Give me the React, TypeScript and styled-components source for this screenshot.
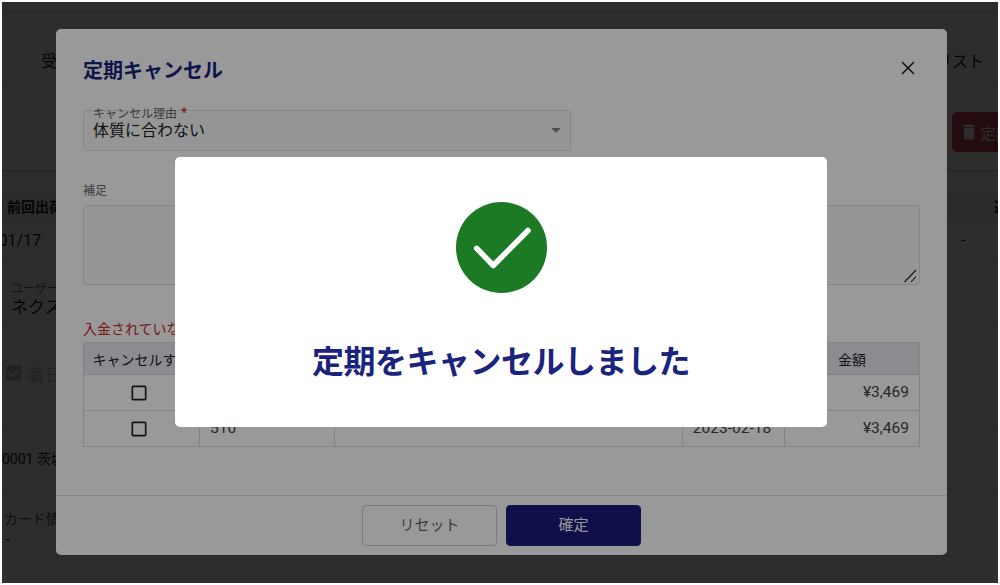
import React from 'react';
import styled, { createGlobalStyle } from 'styled-components';

const GlobalStyle = createGlobalStyle`
  html, body {
    margin: 0;
    padding: 0;
    background: #fff;
  }
  body {
    font-family: Roboto, 'Noto Sans CJK JP', sans-serif;
    color: #212121;
  }
`;

const Viewport = styled.div`
  position: relative;
  width: 996px;
  height: 581px;
  margin: 2px;
  overflow: hidden;
  background: #fff;
`;

/* page behind the dialogs */
const Page = styled.div`
  display: flex;
  flex-direction: column;
  height: 100%;
`;

const TopBar = styled.div`
  height: 10px;
  flex: none;
  border-bottom: 1px solid #d0d0d0;
`;

const Tabs = styled.div`
  height: 73px;
  flex: none;
  display: flex;
  justify-content: space-between;
  align-items: center;
  box-sizing: border-box;
  padding: 22px 14px 0 39px;
  border-bottom: 1px solid #eee;
  font-size: 16px;
  white-space: nowrap;
`;

const Toolbar = styled.div`
  height: 86px;
  flex: none;
  display: flex;
  align-items: center;
  padding: 8px 0 0 950px;
  border-bottom: 2px solid #ddd;
  box-sizing: border-box;
`;

const DangerButton = styled.div`
  flex: none;
  width: 160px;
  height: 40px;
  display: flex;
  align-items: center;
  gap: 2px;
  padding-left: 6.5px;
  box-sizing: border-box;
  background: #c8404a;
  border-radius: 5px;
  color: #fff;
  font-size: 15px;
`;

const SummaryTable = styled.div`
  margin-top: 19px;
  flex: none;
  display: grid;
  grid-template-columns: 330px 1fr 46px;
  grid-template-rows: 31px 36px;
  border-bottom: 1px solid #eee;
  font-size: 16px;
`;

const SummaryHead = styled.div<{ $pad: number }>`
  display: flex;
  align-items: center;
  padding-left: ${(p) => p.$pad}px;
  background: #f4f4f4;
  font-weight: 700;
  font-size: 14px;
  white-space: nowrap;
  border-bottom: 1px solid #eee;
  overflow: hidden;
`;

const SummaryCell = styled.div<{ $pad?: number; $shift?: number }>`
  display: flex;
  align-items: center;
  padding-left: ${(p) => p.$pad ?? 0}px;
  margin-left: ${(p) => p.$shift ?? 0}px;
  white-space: nowrap;
`;

const InfoRow = styled.div`
  height: 67px;
  flex: none;
  display: flex;
  flex-direction: column;
  justify-content: center;
  box-sizing: border-box;
  padding: 14px 0 0 9px;
  border-bottom: 1px solid #eee;
  white-space: nowrap;
`;

const InfoLabel = styled.div`
  font-size: 12px;
  line-height: 15px;
  color: #666;
`;

const InfoValue = styled.div`
  font-size: 17px;
  line-height: 20px;
`;

const CheckRow = styled.div`
  height: 101px;
  flex: none;
  display: flex;
  align-items: center;
  gap: 4px;
  box-sizing: border-box;
  padding: 0 0 6px 2px;
  border-bottom: 1px solid #eee;
  color: #bbb;
  font-size: 17px;
  white-space: nowrap;
`;

const AddressRow = styled.div`
  height: 62px;
  flex: none;
  display: flex;
  align-items: center;
  box-sizing: border-box;
  border-bottom: 1px solid #eee;
  font-size: 14px;
  white-space: nowrap;
`;

const CardRow = styled.div`
  height: 67px;
  flex: none;
  display: flex;
  flex-direction: column;
  justify-content: center;
  box-sizing: border-box;
  padding: 14px 0 0 2px;
  border-bottom: 1px solid #eee;
  font-size: 14px;
  line-height: 20px;
  color: #555;
  white-space: nowrap;
`;

const CardValue = styled.div`
  padding-left: 2px;
  color: #212121;
`;

const PageEnd = styled.div`
  height: 10px;
  flex: none;
  border-bottom: 1px solid #eee;
`;

/* stacked layers */
const Backdrop = styled.div<{ $alpha: number }>`
  position: absolute;
  inset: 0;
  display: flex;
  background: rgba(0, 0, 0, ${(p) => p.$alpha});
`;

const Modal = styled.div`
  width: 891px;
  height: 526px;
  margin: 27px 0 0 54px;
  display: flex;
  flex-direction: column;
  background: #fff;
  border-radius: 5px;
`;

const ModalBody = styled.div`
  flex: 1;
  min-height: 0;
  padding: 0 27px;
`;

const ModalHeader = styled.div`
  height: 81px;
  display: flex;
  align-items: center;
  justify-content: space-between;
  padding-right: 3px;
  box-sizing: border-box;
`;

const ModalTitle = styled.h2`
  margin: 0;
  font-size: 20px;
  font-weight: 700;
  color: #1a237e;
`;

const CloseIcon = styled.svg`
  width: 14px;
  height: 14px;
  margin-top: -3px;
  margin-right: 2px;
  color: #212121;
`;

const SelectBox = styled.div`
  width: 488px;
  height: 41px;
  display: flex;
  align-items: center;
  justify-content: space-between;
  box-sizing: border-box;
  padding: 0 9px;
  border: 1px solid #e0e0e0;
  border-radius: 4px;
  background: #fafafa;
`;

const SelectText = styled.div`
  display: flex;
  flex-direction: column;
  margin-top: -13px;
`;

const SelectLabel = styled.div`
  font-size: 12px;
  line-height: 13px;
  color: #666;
`;

const Required = styled.span`
  color: #c62828;
  font-size: 14px;
  margin-left: 4px;
`;

const SelectValue = styled.div`
  font-size: 16px;
  line-height: 20px;
  color: #212121;
`;

const Caret = styled.span`
  width: 0;
  height: 0;
  border-left: 5px solid transparent;
  border-right: 5px solid transparent;
  border-top: 5px solid #888;
`;

const FieldLabel = styled.div`
  margin-top: 32px;
  font-size: 12px;
  line-height: 16px;
  color: #666;
`;

const TextArea = styled.div`
  margin-top: 6px;
  height: 80px;
  box-sizing: border-box;
  display: flex;
  align-items: flex-end;
  justify-content: flex-end;
  border: 1px solid #e0e0e0;
  border-radius: 4px;
  background: #fafafa;
`;

const Grip = styled.svg`
  width: 14px;
  height: 14px;
  margin: 0 2px 1px 0;
`;

const Notice = styled.div`
  margin-top: 34px;
  font-size: 14px;
  line-height: 20px;
  color: #c62828;
  white-space: nowrap;
`;

const OrderTable = styled.table`
  width: 836px;
  margin-top: 3px;
  border-collapse: collapse;
  table-layout: fixed;
  font-size: 15.5px;
`;

const Col = styled.col<{ $w: number }>`
  width: ${(p) => p.$w}px;
`;

const Th = styled.th`
  height: 31px;
  padding: 0;
  border: 1px solid #ddd;
  background: #e8e8f0;
  font-size: 14px;
  font-weight: 400;
  color: #212121;
  text-align: center;
  white-space: nowrap;
`;

const Td = styled.td<{ $align?: string }>`
  box-sizing: border-box;
  height: 36px;
  padding: 0 10px 2px;
  border: 1px solid #ddd;
  color: #444;
  white-space: nowrap;
  text-align: ${(p) => p.$align ?? 'left'};
`;

const BoxCell = styled(Td)`
  padding: 1px 15px 0 10px;
`;

const DateCell = styled(Td)`
  padding-left: 9px;
  padding-right: 12px;
`;

const BoxIcon = styled.svg`
  display: block;
  width: 20px;
  height: 20px;
  margin: 0 auto;
  color: #212121;
`;

const Footer = styled.div`
  height: 60px;
  flex: none;
  display: flex;
  justify-content: center;
  gap: 9px;
  padding-top: 9px;
  box-sizing: border-box;
  border-top: 1px solid #ddd;
`;

const FooterButton = styled.div<{ $primary?: boolean }>`
  width: 135px;
  height: 41px;
  display: flex;
  align-items: center;
  justify-content: center;
  box-sizing: border-box;
  padding-bottom: 5px;
  border-radius: 4px;
  border: 1px solid ${(p) => (p.$primary ? '#1a237e' : '#ccc')};
  background: ${(p) => (p.$primary ? '#1a1a7e' : 'transparent')};
  color: ${(p) => (p.$primary ? '#fff' : '#666')};
  font-size: 15px;
`;

const SuccessDialog = styled.div`
  width: 652px;
  height: 270px;
  margin: 155px 0 0 173px;
  display: flex;
  flex-direction: column;
  align-items: center;
  box-sizing: border-box;
  padding-top: 45px;
  background: #fff;
  border-radius: 5px;
`;

const SuccessMark = styled.svg`
  width: 91px;
  height: 91px;
  flex: none;
`;

const SuccessTitle = styled.h1`
  margin: 46px 0 0;
  font-size: 32px;
  line-height: 46px;
  letter-spacing: -0.5px;
  font-weight: 700;
  color: #1a237e;
  white-space: nowrap;
`;

const orders = [
  { id: '509', date: '2023-01-18', amount: '¥3,469' },
  { id: '510', date: '2023-02-18', amount: '¥3,469' },
];

const App = () => {
  return (
    <>
      <GlobalStyle />
      <Viewport>
        <Page>
          <TopBar />
          <Tabs>
            <span>受注情報</span>
            <span>リスト</span>
          </Tabs>
          <Toolbar>
            <DangerButton>
              <svg width="20" height="20" viewBox="0 0 24 24" fill="currentColor">
                <path d="M6 19c0 1.1.9 2 2 2h8c1.1 0 2-.9 2-2V7H6v12zM19 4h-3.5l-1-1h-5l-1 1H5v2h14V4z" />
              </svg>
              定期キャンセル
            </DangerButton>
          </Toolbar>
          <SummaryTable>
            <SummaryHead $pad={5}>前回出荷日</SummaryHead>
            <SummaryHead $pad={0} />
            <SummaryHead $pad={42}>連絡先</SummaryHead>
            <SummaryCell $shift={-46}>2023/01/17</SummaryCell>
            <SummaryCell />
            <SummaryCell $pad={9}>-</SummaryCell>
          </SummaryTable>
          <InfoRow>
            <InfoLabel>ユーザー名</InfoLabel>
            <InfoValue>ネクスト</InfoValue>
          </InfoRow>
          <CheckRow>
            <svg width="20" height="20" viewBox="0 0 24 24" fill="#bbb">
              <path d="M19 3H5c-1.11 0-2 .9-2 2v14c0 1.1.89 2 2 2h14c1.11 0 2-.9 2-2V5c0-1.1-.89-2-2-2zm-9 14l-5-5 1.41-1.41L10 14.17l7.59-7.59L19 8l-9 9z" />
            </svg>
            着日指定
          </CheckRow>
          <AddressRow>0001 茨城県</AddressRow>
          <CardRow>
            カード情報
            <CardValue>-</CardValue>
          </CardRow>
          <PageEnd />
        </Page>

        <Backdrop $alpha={0.7}>
          <Modal>
            <ModalBody>
              <ModalHeader>
                <ModalTitle>定期キャンセル</ModalTitle>
                <CloseIcon viewBox="0 0 14 14" fill="none" stroke="currentColor" strokeWidth="1.6">
                  <path d="M1 1l12 12M13 1L1 13" />
                </CloseIcon>
              </ModalHeader>
              <SelectBox>
                <SelectText>
                  <SelectLabel>
                    キャンセル理由<Required>*</Required>
                  </SelectLabel>
                  <SelectValue>体質に合わない</SelectValue>
                </SelectText>
                <Caret />
              </SelectBox>
              <FieldLabel>補足</FieldLabel>
              <TextArea>
                <Grip viewBox="0 0 14 14" fill="none" stroke="#222" strokeWidth="1.1">
                  <path d="M1.5 13L13 1M8 13L13 7.5" />
                </Grip>
              </TextArea>
              <Notice>入金されていない注文のみキャンセルできます</Notice>
              <OrderTable>
                <colgroup>
                  <Col $w={116} />
                  <Col $w={135} />
                  <Col $w={348} />
                  <Col $w={102} />
                  <Col $w={135} />
                </colgroup>
                <thead>
                  <tr>
                    <Th>キャンセルする</Th>
                    <Th>注文ID</Th>
                    <Th>商品名</Th>
                    <Th>出荷日</Th>
                    <Th>金額</Th>
                  </tr>
                </thead>
                <tbody>
                  {orders.map((o) => (
                    <tr key={o.id}>
                      <BoxCell>
                        <BoxIcon viewBox="0 0 24 24" fill="currentColor">
                          <path d="M19 5v14H5V5h14m0-2H5c-1.1 0-2 .9-2 2v14c0 1.1.9 2 2 2h14c1.1 0 2-.9 2-2V5c0-1.1-.9-2-2-2z" />
                        </BoxIcon>
                      </BoxCell>
                      <Td>{o.id}</Td>
                      <Td />
                      <DateCell $align="center">{o.date}</DateCell>
                      <Td $align="right">{o.amount}</Td>
                    </tr>
                  ))}
                </tbody>
              </OrderTable>
            </ModalBody>
            <Footer>
              <FooterButton>リセット</FooterButton>
              <FooterButton $primary>確定</FooterButton>
            </Footer>
          </Modal>
        </Backdrop>

        <Backdrop $alpha={0.4}>
          <SuccessDialog>
            <SuccessMark viewBox="0 0 91 91">
              <circle cx="45.5" cy="45.5" r="45.5" fill="#1b7a23" />
              <path
                d="M20.7 46.3L37.3 63.5L72 28.5"
                fill="none"
                stroke="#fff"
                strokeWidth="5.5"
                strokeLinecap="round"
                strokeLinejoin="round"
              />
            </SuccessMark>
            <SuccessTitle>定期をキャンセルしました</SuccessTitle>
          </SuccessDialog>
        </Backdrop>
      </Viewport>
    </>
  );
};

export default App;
